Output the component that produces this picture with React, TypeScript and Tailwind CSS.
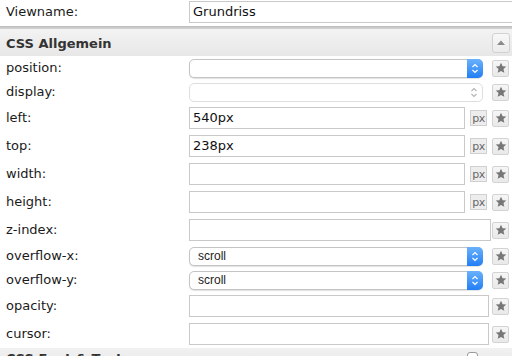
import React from 'react';

const StarIcon: React.FC = () => (
  <svg width="12" height="12" viewBox="0 0 24 24">
    <path d="M12 1.5l3.2 7 7.3.7-5.5 5 1.6 7.3L12 17.8 5.4 21.5 7 14.2l-5.5-5 7.3-.7z" fill="#777777" />
  </svg>
);

const StarButton: React.FC = () => (
  <div className="w-[17px] h-[17px] shrink-0 flex items-center justify-center rounded-[2px] border border-[#d3d3d3] bg-gradient-to-b from-[#f6f6f6] to-[#e9e9e9]">
    <StarIcon />
  </div>
);

const PxButton: React.FC = () => (
  <div className="w-[17px] h-[16px] ml-[5px] flex items-center justify-center border border-[#d0d0d0] bg-[#ededed] text-[11px] tracking-[-0.5px] text-[#666] leading-none">
    px
  </div>
);

const Chevrons: React.FC<{ color: string }> = ({ color }) => (
  <svg width="8" height="11" viewBox="0 0 8 11" fill="none" stroke={color} strokeWidth="1.2">
    <path d="M1.5 4L4 1.5 6.5 4" />
    <path d="M1.5 7L4 9.5 6.5 7" />
  </svg>
);

const SelectBox: React.FC<{ value?: string; disabled?: boolean }> = ({ value, disabled }) => (
  <div
    className={`w-[294px] h-[19px] flex items-stretch rounded-[5px] border bg-white ${
      disabled ? 'border-[#dedede]' : 'border-[#c4c4c4] shadow-[0_1px_1px_rgba(0,0,0,0.12)]'
    }`}
  >
    <div className="flex-1 flex items-center pl-[8px] text-[12px] text-[#222]" style={{ fontFamily: '"Liberation Sans", Arial, sans-serif' }}>
      {value}
    </div>
    {disabled ? (
      <div className="w-[16px] flex items-center justify-center">
        <Chevrons color="#b5b5b5" />
      </div>
    ) : (
      <div className="w-[16px] -my-px -mr-px flex items-center justify-center rounded-r-[5px] bg-gradient-to-b from-[#69b1fb] to-[#1f7ef5]">
        <Chevrons color="#ffffff" />
      </div>
    )}
  </div>
);

const TextBox: React.FC<{ value?: string; width: string }> = ({ value, width }) => (
  <div className={`${width} h-[22px] flex items-center pl-[3px] border border-[#c9c9c9] bg-white text-[13px] text-[#111]`}>
    {value}
  </div>
);

type Row =
  | { label: string; kind: 'select'; value?: string; disabled?: boolean }
  | { label: string; kind: 'px'; value?: string }
  | { label: string; kind: 'text'; width: string };

const ROWS: Row[] = [
  { label: 'position:', kind: 'select' },
  { label: 'display:', kind: 'select', disabled: true },
  { label: 'left:', kind: 'px', value: '540px' },
  { label: 'top:', kind: 'px', value: '238px' },
  { label: 'width:', kind: 'px' },
  { label: 'height:', kind: 'px' },
  { label: 'z-index:', kind: 'text', width: 'w-[302px]' },
  { label: 'overflow-x:', kind: 'select', value: 'scroll' },
  { label: 'overflow-y:', kind: 'select', value: 'scroll' },
  { label: 'opacity:', kind: 'text', width: 'w-[300px]' },
  { label: 'cursor:', kind: 'text', width: 'w-[300px]' },
];

const App: React.FC = () => {
  return (
    <div
      className="w-[512px] h-[356px] overflow-hidden bg-white text-[#1a1a1a]"
      style={{ fontFamily: '"DejaVu Sans", Verdana, sans-serif' }}
    >
      {/* Viewname */}
      <div className="h-[24px] flex items-center">
        <div className="w-[189px] shrink-0 pl-[6px] text-[13px]">Viewname:</div>
        <div className="w-[340px] shrink-0 h-[22px] flex items-center pl-[3px] border border-[#c9c9c9] text-[13px] text-[#111]">
          Grundriss
        </div>
      </div>
      <div className="h-[2px]" />
      <div className="h-[3px] bg-gradient-to-b from-[#bcbcbc] to-[#d6d6d6]" />

      {/* CSS Allgemein header */}
      <div className="h-[27px] flex items-center bg-gradient-to-b from-[#f3f3f3] to-[#e7e7e7]">
        <div className="flex-1 pl-[6px] pt-[2px] text-[13px] font-bold text-[#333]">CSS Allgemein</div>
        <div className="w-[18px] h-[20px] mr-[2px] flex items-center justify-center rounded-[3px] border border-[#d2d2d2] bg-gradient-to-b from-[#f8f8f8] to-[#ececec]">
          <svg width="8" height="5" viewBox="0 0 8 5">
            <path d="M0 5L4 0.5 8 5z" fill="#8a8a8a" />
          </svg>
        </div>
      </div>

      {/* Property rows */}
      {ROWS.map((row) => (
        <div key={row.label} className={`${row.kind === 'select' ? 'h-[24px]' : 'h-[28px]'} flex items-center`}>
          <div className="w-[189px] shrink-0 pl-[6px] text-[13px]">{row.label}</div>
          <div className="w-[303px] shrink-0 flex items-center">
            {row.kind === 'select' && <SelectBox value={row.value} disabled={row.disabled} />}
            {row.kind === 'px' && (
              <>
                <TextBox value={row.value} width="w-[276px]" />
                <PxButton />
              </>
            )}
            {row.kind === 'text' && <TextBox width={row.width} />}
          </div>
          <StarButton />
        </div>
      ))}

      {/* CSS Font & Text header */}
      <div className="h-[20px] flex items-start bg-gradient-to-b from-[#f1f1f1] to-[#e8e8e8]">
        <div className="flex-1 pl-[6px] pt-px text-[13px] font-bold text-[#333]">CSS Font &amp; Text</div>
        <div className="w-[11px] h-[11px] mt-[4px] mr-[34px] rounded-[3px] border border-[#9a9a9a] bg-white" />
      </div>
    </div>
  );
};

export default App;
